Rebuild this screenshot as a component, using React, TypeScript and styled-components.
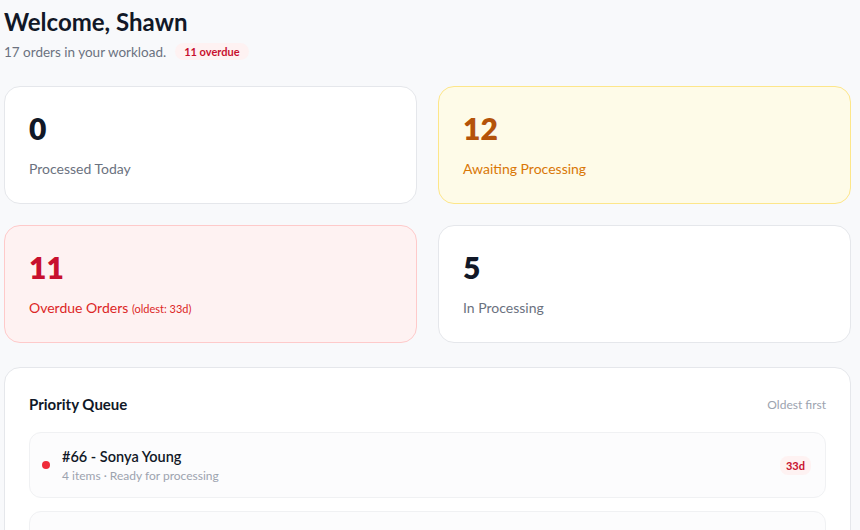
import React from "react"
import styled, {createGlobalStyle} from "styled-components"

const GlobalStyle = createGlobalStyle`
  body {
    margin: 0;
    background: #f8f9fb;
    font-family: "Lato", "Noto Sans", sans-serif;
    color: #111827;
  }
`

const Page = styled.div`
  width: 847px;
  padding: 6px 0 0 4px;
`

const Title = styled.h1`
  margin: 0;
  font-size: 24px;
  font-weight: 700;
  line-height: 32px;
  color: #111827;
`

const Subtitle = styled.div`
  margin-top: 5px;
  display: flex;
  align-items: center;
  gap: 9px;
  font-size: 13.5px;
  color: #6b7280;
`

const Pill = styled.span`
  background: #fef2f2;
  color: #c8102e;
  font-size: 11px;
  font-weight: 700;
  padding: 2px 9px;
  border-radius: 10px;
`

const Grid = styled.div`
  margin-top: 26px;
  display: grid;
  grid-template-columns: 1fr 1fr;
  gap: 21px;
`

type Tone = "plain" | "warn" | "danger"

const tones = {
    plain: {bg: "#ffffff", border: "#e5e7eb", num: "#111827", label: "#6b7280"},
    warn: {bg: "#fefbe8", border: "#fde68a", num: "#b45309", label: "#d97706"},
    danger: {bg: "#fef2f2", border: "#fecaca", num: "#c8102e", label: "#dc2626"},
}

const Card = styled.div<{$tone: Tone}>`
  height: 118px;
  box-sizing: border-box;
  padding: 24px 24px;
  border-radius: 16px;
  background: ${p => tones[p.$tone].bg};
  border: 1px solid ${p => tones[p.$tone].border};
`

const Number = styled.div<{$tone: Tone}>`
  font-size: 30px;
  font-weight: 800;
  line-height: 34px;
  color: ${p => tones[p.$tone].num};
`

const Label = styled.div<{$tone: Tone}>`
  margin-top: 15px;
  font-size: 14px;
  color: ${p => tones[p.$tone].label};
`

const Small = styled.span`
  font-size: 11px;
`

const Panel = styled.div`
  margin-top: 24px;
  background: #fff;
  border: 1px solid #e5e7eb;
  border-radius: 16px;
  padding: 27px 24px 0;
  height: 180px;
`

const PanelHead = styled.div`
  display: flex;
  justify-content: space-between;
  align-items: center;
`

const PanelTitle = styled.div`
  font-size: 15px;
  font-weight: 700;
`

const Hint = styled.div`
  font-size: 12px;
  color: #9ca3af;
`

const List = styled.div`
  margin-top: 19px;
  display: flex;
  flex-direction: column;
  gap: 13px;
`

const Item = styled.div`
  height: 66px;
  box-sizing: border-box;
  display: flex;
  align-items: center;
  gap: 12px;
  padding: 0 14px 0 12px;
  background: #fcfcfd;
  border: 1px solid #f0f1f3;
  border-radius: 12px;
`

const Dot = styled.span`
  width: 8px;
  height: 8px;
  border-radius: 50%;
  background: #ef2b3a;
`

const ItemText = styled.div`
  flex: 1;
`

const ItemName = styled.div`
  font-size: 14.5px;
  font-weight: 600;
`

const ItemMeta = styled.div`
  margin-top: 3px;
  font-size: 12px;
  color: #9ca3af;
`

const Age = styled.span`
  background: #fef2f2;
  color: #c8102e;
  font-size: 11px;
  font-weight: 700;
  padding: 3px 6px;
  border-radius: 8px;
`

const stats: {n: string, label: React.ReactNode, tone: Tone}[] = [
    {n: "0", label: "Processed Today", tone: "plain"},
    {n: "12", label: "Awaiting Processing", tone: "warn"},
    {n: "11", label: <>Overdue Orders <Small>(oldest: 33d)</Small></>, tone: "danger"},
    {n: "5", label: "In Processing", tone: "plain"},
]

const App: React.FC = () => (
    <Page>
        <GlobalStyle/>
        <Title>Welcome, Shawn</Title>
        <Subtitle>
            17 orders in your workload.
            <Pill>11 overdue</Pill>
        </Subtitle>
        <Grid>
            {stats.map((s, i) => (
                <Card key={i} $tone={s.tone}>
                    <Number $tone={s.tone}>{s.n}</Number>
                    <Label $tone={s.tone}>{s.label}</Label>
                </Card>
            ))}
        </Grid>
        <Panel>
            <PanelHead>
                <PanelTitle>Priority Queue</PanelTitle>
                <Hint>Oldest first</Hint>
            </PanelHead>
            <List>
                <Item>
                    <Dot/>
                    <ItemText>
                        <ItemName>#66 - Sonya Young</ItemName>
                        <ItemMeta>4 items · Ready for processing</ItemMeta>
                    </ItemText>
                    <Age>33d</Age>
                </Item>
                <Item/>
            </List>
        </Panel>
    </Page>
)

export default App
